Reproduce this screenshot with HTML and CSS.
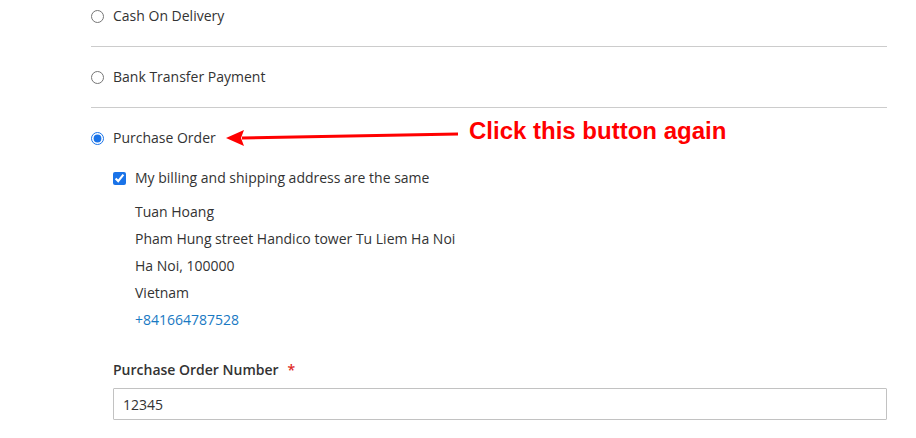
FILE: index.html
```html
<!DOCTYPE html>
<html>
<head>
<meta charset="utf-8">
<link rel="stylesheet" href="styles.css">
</head>
<body>
<div class="page">
  <div class="methods">
    <div class="option first">
      <label class="opt-row"><input type="radio" name="pm" class="radio"><span>Cash On Delivery</span></label>
    </div>
    <div class="option">
      <label class="opt-row"><input type="radio" name="pm" class="radio"><span>Bank Transfer Payment</span></label>
    </div>
    <div class="option last">
      <label class="opt-row"><input type="radio" name="pm" class="radio" checked><span>Purchase Order</span></label>
      <div class="details">
        <label class="check-row"><input type="checkbox" class="check" checked><span>My billing and shipping address are the same</span></label>
        <div class="address">
          <div>Tuan Hoang</div>
          <div>Pham Hung street Handico tower Tu Liem Ha Noi</div>
          <div>Ha Noi, 100000</div>
          <div>Vietnam</div>
          <div><a class="phone" href="#">+841664787528</a></div>
        </div>
        <div class="field">
          <div class="field-label">Purchase Order Number<span class="req">*</span></div>
          <input class="field-input" type="text" value="12345">
        </div>
      </div>
    </div>
  </div>
  <svg class="arrow" width="240" height="20" viewBox="0 0 240 20">
    <line x1="16" y1="12" x2="232" y2="8" stroke="#ff0000" stroke-width="3"/>
    <polygon points="0,12 18,4 15,12 18,20" fill="#ff0000"/>
  </svg>
  <div class="note">Click this button again</div>
</div>
</body>
</html>
```
FILE: styles.css
```css
html, body {
  margin: 0;
  padding: 0;
  background: #fff;
}
.page {
  position: relative;
  width: 916px;
  height: 438px;
  overflow: hidden;
  font-family: "Open Sans", "DejaVu Sans", sans-serif;
  font-size: 14px;
  color: #333;
}
.methods {
  margin-left: 91px;
  width: 796px;
  padding-top: 6px;
}
.option {
  padding: 20px 0 20px;
  border-bottom: 1px solid #cccccc;
}
.option.first {
  padding-top: 0;
}
.option.last {
  border-bottom: none;
}
.opt-row {
  display: flex;
  align-items: center;
  height: 20px;
  line-height: 20px;
}
.radio {
  width: 13px;
  height: 13px;
  margin: 0 9px 0 0;
  accent-color: #1a73e8;
}
.details {
  padding-left: 22px;
  margin-top: 20px;
}
.check-row {
  display: flex;
  align-items: center;
  height: 20px;
  line-height: 20px;
}
.check {
  width: 13px;
  height: 13px;
  margin: 0 9px 0 0;
  accent-color: #1a73e8;
}
.address {
  margin-top: 10px;
  padding-left: 22px;
  line-height: 27px;
}
.phone {
  color: #1979c3;
  text-decoration: none;
}
.field {
  margin-top: 27px;
}
.field-label {
  font-weight: 600;
  line-height: 20px;
}
.req {
  color: #e02b27;
  margin-left: 9px;
}
.field-input {
  display: block;
  box-sizing: border-box;
  margin-top: 8px;
  width: 774px;
  height: 32px;
  border: 1px solid #c2c2c2;
  border-radius: 1px;
  padding: 0 9px;
  font-family: "Open Sans", "DejaVu Sans", sans-serif;
  font-size: 14px;
  color: #333;
  background: #fff;
}
.arrow {
  position: absolute;
  left: 226px;
  top: 126px;
}
.note {
  position: absolute;
  left: 469px;
  top: 116px;
  font-family: "Liberation Sans", Arial, sans-serif;
  font-weight: bold;
  font-size: 24px;
  line-height: 30px;
  color: #ff0000;
}
```
